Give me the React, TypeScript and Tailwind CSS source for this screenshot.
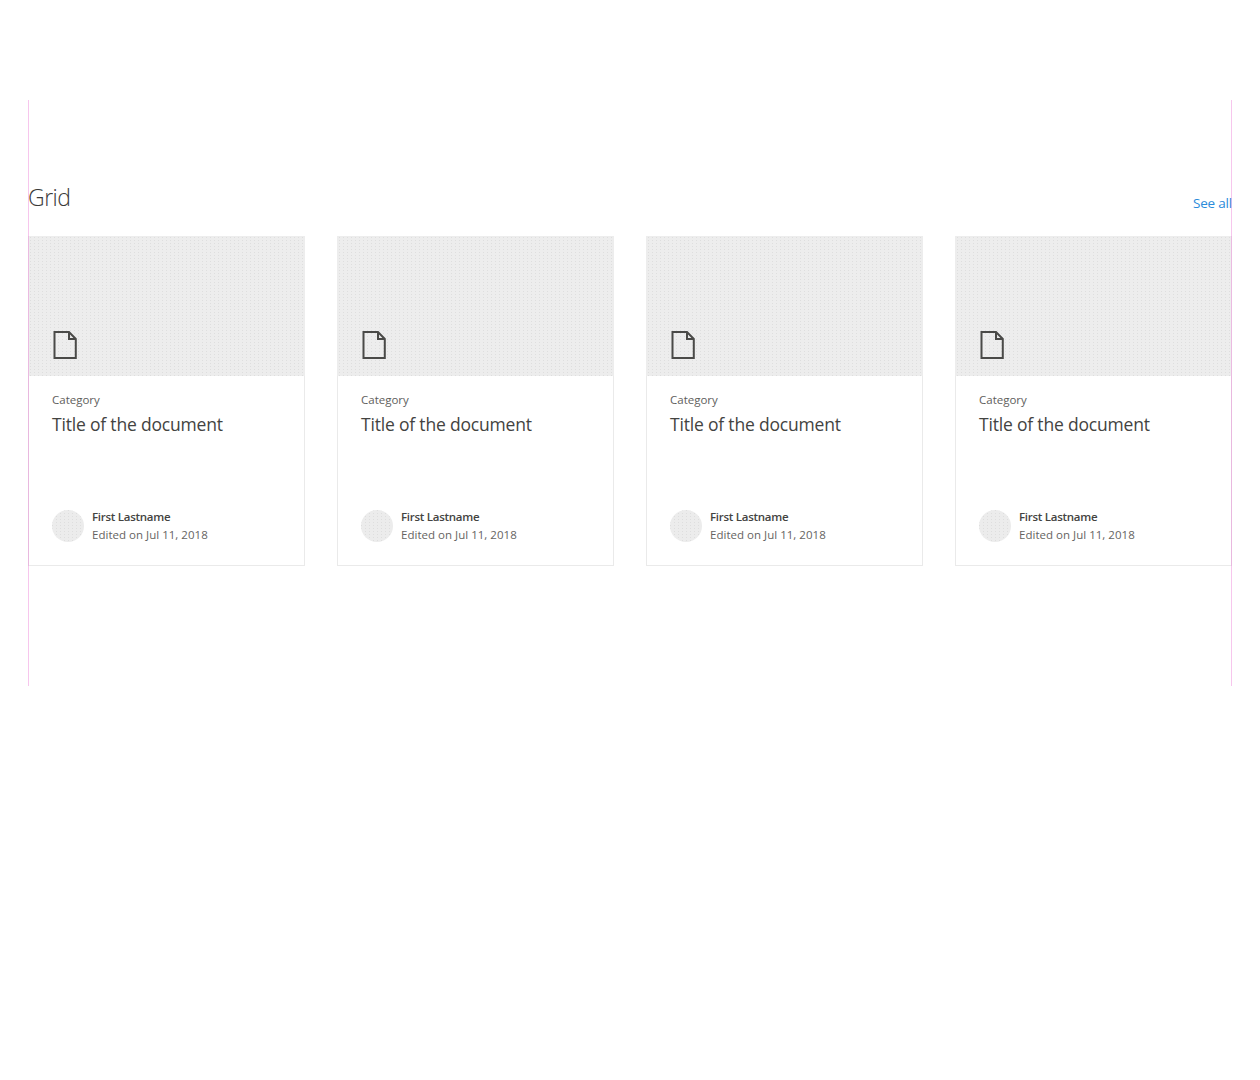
import React from 'react';

const documents = [1, 2, 3, 4];

function DocumentCard() {
  return (
    <article className="flex h-[330px] w-[277px] flex-col border border-[#eaeaea] bg-white">
      <div className="-mx-px -mt-px flex h-[140px] items-end bg-[#ededed] bg-[conic-gradient(at_1px_1px,transparent_75%,#dedede_0)] bg-[size:4px_3px] bg-[position:2px_1px] pb-4 pl-6">
        <svg width="26" height="30" viewBox="0 0 26 30" fill="none" stroke="#4a4a48" strokeWidth="2">
          <path d="M2.5 2H17L23.8 9V28H2.5Z" />
          <path d="M17 2V9H24" />
        </svg>
      </div>
      <div className="flex grow flex-col pr-6 pl-[23px]">
        <p className="mt-[15px] text-[11.5px] leading-[17px] text-[#605e5c]"><span>Category</span></p>
        <h2 className="mt-[5px] text-[17.5px] leading-[23px] tracking-[-0.19px] whitespace-nowrap text-[#434341]"><span>Title of the document</span></h2>
        <div className="mt-auto mb-[21px] flex items-center gap-2">
          <span className="size-8 rounded-full bg-[#ececec] bg-[conic-gradient(at_1px_1px,transparent_75%,#dedede_0)] bg-[size:4px_3px]" />
          <div className="text-[11.5px] leading-[18px] whitespace-nowrap">
            <p className="font-semibold tracking-[-0.27px] text-[#434341]"><span>First Lastname</span></p>
            <p className="tracking-[0.02px] text-[#666462]"><span>Edited on Jul 11, 2018</span></p>
          </div>
        </div>
      </div>
    </article>
  );
}

export default function App() {
  return (
    <div className="min-h-[1080px] bg-white px-7 pt-[100px] font-['Open_Sans','Noto_Sans',sans-serif]">
      <main className="relative h-[586px] pt-[82px]">
        <header className="flex h-8 items-start justify-between">
          <h1 className="text-[23px] leading-[31px] font-light tracking-[-0.5px] text-[#3b3a39]">Grid</h1>
          <a className="mt-[11px] text-[13.5px] leading-[21px] font-medium tracking-[-0.2px] text-[#2b8bda]">See all</a>
        </header>
        <section className="mt-[22px] grid grid-cols-4 gap-8">
          {documents.map((id) => <DocumentCard key={id} />)}
        </section>
        <div className="pointer-events-none absolute inset-0 border-x border-[#e85ccb]/35" />
      </main>
    </div>
  );
}
